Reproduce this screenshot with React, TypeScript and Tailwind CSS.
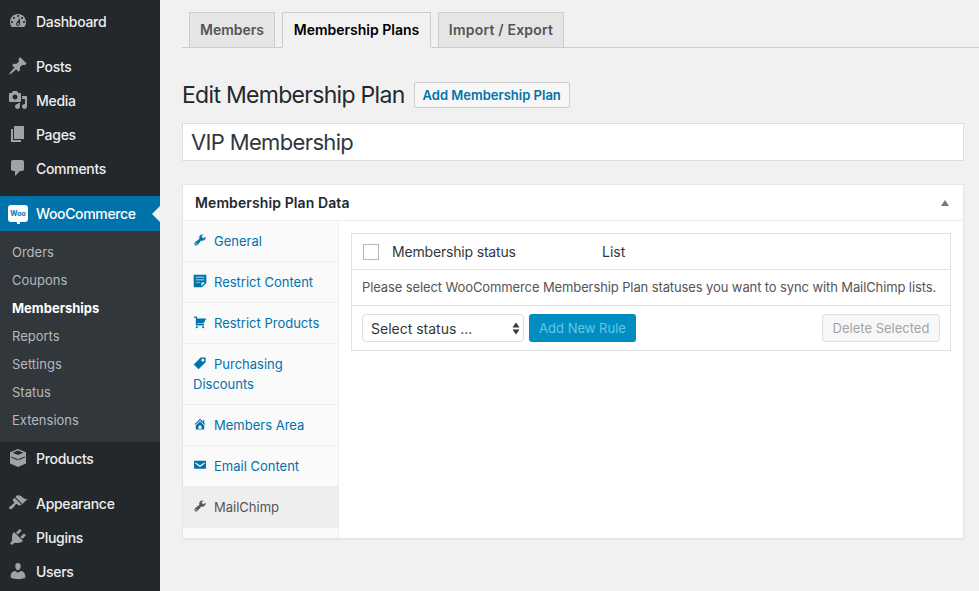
const icons = {
  dashboard: "M3.76 16h12.48c1.1-1.37 1.76-3.11 1.76-5 0-4.42-3.58-8-8-8s-8 3.58-8 8c0 1.89.66 3.63 1.76 5zM10 4c.55 0 1 .45 1 1s-.45 1-1 1-1-.45-1-1 .45-1 1-1zM6 6c.55 0 1 .45 1 1s-.45 1-1 1-1-.45-1-1 .45-1 1-1zm8 0c.55 0 1 .45 1 1s-.45 1-1 1-1-.45-1-1 .45-1 1-1zm-5.37 5.55L12 7v6c0 1.1-.9 2-2 2s-2-.9-2-2c0-.57.24-1.08.63-1.45zM4 10c.55 0 1 .45 1 1s-.45 1-1 1-1-.45-1-1 .45-1 1-1zm12 0c.55 0 1 .45 1 1s-.45 1-1 1-1-.45-1-1 .45-1 1-1zm-5 3c0-.55-.45-1-1-1s-1 .45-1 1 .45 1 1 1 1-.45 1-1z",
  post: "M10.44 3.02l1.82-1.82 6.36 6.35-1.83 1.82c-1.05-.68-2.48-.57-3.41.36l-.75.75c-.92.93-1.04 2.35-.35 3.41l-1.83 1.82-2.41-2.41-2.8 2.79c-.42.42-3.38 2.71-3.8 2.29s1.86-3.39 2.28-3.81l2.79-2.79L4.1 9.36l1.83-1.82c1.05.69 2.48.57 3.4-.36l.75-.75c.93-.92 1.05-2.35.36-3.41z",
  media: "M13 11V4c0-.55-.45-1-1-1h-1.67L9 1H5L3.67 3H2c-.55 0-1 .45-1 1v7c0 .55.45 1 1 1h10c.55 0 1-.45 1-1zM7 4.5c1.38 0 2.5 1.12 2.5 2.5S8.38 9.5 7 9.5 4.5 8.38 4.5 7 5.62 4.5 7 4.5zM14 6h5v10.5c0 1.38-1.12 2.5-2.5 2.5S14 17.88 14 16.5s1.12-2.5 2.5-2.5c.17 0 .34.02.5.05V9h-3V6zm-4 8.05V13h2v3.5c0 1.38-1.12 2.5-2.5 2.5S7 17.88 7 16.5 8.12 14 9.5 14c.17 0 .34.02.5.05z",
  page: "M6 15V2h10v13H6zm-1 1h8v2H3V5h2v11z",
  comments: "M5 2h9c1.1 0 2 .9 2 2v7c0 1.1-.9 2-2 2h-2l-5 5v-5H5c-1.1 0-2-.9-2-2V4c0-1.1.9-2 2-2z",
  products: "M10 1l8 3.2v11.3L10 19l-8-3.5V4.2L10 1zm0 1.6L4.6 4.7 10 6.9l5.4-2.2L10 2.6zM3 8.4l6.6 2.7v1.2L3 9.6V8.4zm14 0v1.2l-6.6 2.7v-1.2L17 8.4z",
  appearance: "M14.48 11.06L7.41 3.99l1.5-1.5c.5-.56 2.3-.47 3.51.32 1.21.8 1.43 1.28 2.91 2.1 1.18.64 2.45 1.26 4.45.85zm-.71.71L6.7 4.7 4.93 6.47c-.39.39-.39 1.02 0 1.41l1.06 1.06c.39.39.39 1.03 0 1.42-.6.6-1.43 1.11-2.21 1.69-.35.26-.7.53-1.01.84C1.43 13.23.4 14.84 1.4 15.84c.99 1 2.6-.03 3.93-1.37.31-.31.58-.66.84-1.01.58-.78 1.09-1.61 1.69-2.21.39-.39 1.02-.39 1.41 0l1.06 1.06c.39.39 1.02.39 1.41 0z",
  plugins: "M13.11 4.36L9.87 7.6 8 5.73l3.24-3.24c.35-.34 1.05-.2 1.56.32.52.51.66 1.21.31 1.55zm-8 1.77l.91-1.12 9.01 9.01-1.19.84c-.71.71-2.63 1.16-3.82 1.16H6.14L4.9 17.26c-.59.59-1.54.59-2.12 0-.59-.58-.59-1.53 0-2.12l1.24-1.24v-3.88c0-1.13.4-3.19 1.09-3.89zm7.26 3.97l3.24-3.24c.34-.35 1.04-.21 1.55.31.52.51.66 1.21.31 1.55l-3.24 3.25z",
  users: "M10 9.25c-2.27 0-2.73-3.44-2.73-3.44C7 4.02 7.82 2 9.97 2c2.16 0 2.98 2.02 2.71 3.81 0 0-.41 3.44-2.68 3.44zm0 2.57L12.72 10c2.39 0 4.52 2.33 4.52 4.53v2.49s-3.65 1.13-7.24 1.13c-3.65 0-7.24-1.13-7.24-1.13v-2.49c0-2.25 1.94-4.48 4.47-4.48z",
  tools: "M16.68 9.77c-1.34 1.34-3.3 1.67-4.95.99l-5.41 6.52c-.99.99-2.59.99-3.58 0s-.99-2.59 0-3.57l6.52-5.42c-.68-1.65-.35-3.61.99-4.95 1.28-1.28 3.12-1.62 4.72-1.06l-2.89 2.89 2.82 2.82 2.86-2.87c.53 1.58.18 3.39-1.08 4.65zM3.81 16.21c.4.39 1.04.39 1.43 0 .4-.4.4-1.04 0-1.43-.39-.4-1.03-.4-1.43 0-.39.39-.39 1.03 0 1.43z",
  aside: "M1 1h18v12l-6 6H1V1zm3 3v1h12V4H4zm0 4v1h12V8H4zm6 5v-1H4v1h6zm2 4l5-5h-5v5z",
  cart: "M6 13h9c.55 0 1 .45 1 1s-.45 1-1 1H5c-.55 0-1-.45-1-1V4H2c-.55 0-1-.45-1-1s.45-1 1-1h3c.55 0 1 .45 1 1v2h13l-4 7H6v1zm-.5 3c.83 0 1.5.67 1.5 1.5S6.33 19 5.5 19 4 18.33 4 17.5 4.67 16 5.5 16zm9 0c.83 0 1.5.67 1.5 1.5s-.67 1.5-1.5 1.5-1.5-.67-1.5-1.5.67-1.5 1.5-1.5z",
  tag: "M11 2h7v7L8 19l-7-7zm3 6c1.1 0 2-.9 2-2s-.9-2-2-2-2 .9-2 2 .9 2 2 2z",
  home: "M16 8.5l1.53 1.53-1.06 1.06L10 4.62l-6.47 6.47-1.06-1.06L10 2.5l4 4v-2h2v4zm-6-2.46l6 5.99V18H4v-5.97zM12 17v-5H8v5h4z",
  email: "M1.5 4h17v11.5h-17zM3.5 6l6.5 4.6L16.5 6v2.2L10 12.8 3.5 8.2z",
};

type IconName = keyof typeof icons;

function Icon({ name, className }: { name: IconName; className?: string }) {
  return (
    <svg viewBox="0 0 20 20" fill="currentColor" fillRule="evenodd" className={className}>
      <path d={icons[name]} />
    </svg>
  );
}

function MenuItem({ icon, label }: { icon: IconName; label: string }) {
  return (
    <div className="flex h-[34px] items-center pb-[2px] text-[14px] font-medium tracking-[-0.3px] text-[#eeeeee]">
      <Icon name={icon} className="ml-2 mr-2 h-5 w-5 text-[#9ea3a8]" />
      {label}
    </div>
  );
}

const submenu = ["Orders", "Coupons", "Memberships", "Reports", "Settings", "Status", "Extensions"];

function Sidebar() {
  return (
    <aside className="h-full w-[160px] shrink-0 overflow-hidden bg-[#23282d] pt-[5px]">
      <MenuItem icon="dashboard" label="Dashboard" />
      <div className="mt-[11px]">
        <MenuItem icon="post" label="Posts" />
        <MenuItem icon="media" label="Media" />
        <MenuItem icon="page" label="Pages" />
        <MenuItem icon="comments" label="Comments" />
      </div>

      {/* WooCommerce */}
      <div className="relative mt-[10px] flex h-[35px] items-center bg-[#0073aa] text-[14px] font-medium tracking-[-0.35px] text-white">
        <div className="relative ml-2 mr-2 flex h-[17px] w-5 items-center justify-center rounded-[3px] bg-white text-[7px] font-bold leading-none tracking-normal text-[#0073aa]">
          Woo
          <span className="absolute -bottom-[2px] left-[9px] h-[3px] w-[3px] bg-white" />
        </div>
        WooCommerce
        <span className="absolute right-0 top-[10px] h-0 w-0 border-y-[8px] border-r-[8px] border-y-transparent border-r-[#f1f1f1]" />
      </div>
      <div className="bg-[#32373c] pb-[7px] pt-2">
        {submenu.map((s) => (
          <div
            key={s}
            className={
              s === "Memberships"
                ? "flex h-7 items-center pl-3 text-[13px] font-bold text-white"
                : "flex h-7 items-center pl-3 text-[13px] text-[#b4b9be]"
            }
          >
            {s}
          </div>
        ))}
      </div>

      <MenuItem icon="products" label="Products" />
      <div className="mt-[11px]">
        <MenuItem icon="appearance" label="Appearance" />
        <MenuItem icon="plugins" label="Plugins" />
        <MenuItem icon="users" label="Users" />
      </div>
    </aside>
  );
}

const dataTabs: { icon: IconName; label: string; wrap?: string }[] = [
  { icon: "tools", label: "General" },
  { icon: "aside", label: "Restrict Content" },
  { icon: "cart", label: "Restrict Products" },
  { icon: "tag", label: "Purchasing", wrap: "Discounts" },
  { icon: "home", label: "Members Area" },
  { icon: "email", label: "Email Content" },
];

function DataTabs() {
  return (
    <div className="w-[156px] shrink-0 border-r border-[#eeeeee] bg-[#fafafa]">
      {dataTabs.map((t) => (
        <div key={t.label} className="border-b border-[#eeeeee] px-[10px] py-[10px] text-[13px] leading-5 text-[#0073aa]">
          <div className="flex items-center">
            <Icon name={t.icon} className="-mt-[3px] mr-[7px] h-[14px] w-[14px]" />
            {t.label}
          </div>
          {t.wrap && <div>{t.wrap}</div>}
        </div>
      ))}
      <div className="-mt-px flex h-[42px] items-center bg-[#eeeeee] px-[10px] pt-px text-[13px] text-[#555555]">
        <Icon name="tools" className="-mt-[3px] mr-[7px] h-[14px] w-[14px]" />
        MailChimp
      </div>
    </div>
  );
}

function RulesTable() {
  return (
    <div className="m-3 flex-1 self-start border border-[#e1e1e1] text-[13px] text-[#32373c]">
      <div className="flex h-9 items-center border-b border-[#e1e1e1] pl-[11px] text-[14px]">
        <input type="checkbox" readOnly className="h-4 w-4 appearance-none border border-[#b4b9be] bg-white" />
        <span className="ml-[13px] w-[210px] tracking-[-0.18px]">Membership status</span>
        <span>List</span>
      </div>
      <div className="flex h-9 items-center border-b border-[#e1e1e1] pl-[10px] tracking-[-0.11px] text-[#555555]">
        Please select WooCommerce Membership Plan statuses you want to sync with MailChimp lists.
      </div>
      <div className="flex h-11 items-center justify-between pl-[10px] pr-[10px]">
        <div className="flex items-center gap-[5px]">
          <div className="relative">
            <select className="h-7 w-[162px] appearance-none rounded-[4px] border border-[#dddddd] bg-white pl-2 text-[14px] text-[#32373c]">
              <option>Select status ...</option>
            </select>
            <svg viewBox="0 0 8 12" fill="#32373c" className="absolute right-[4px] top-[8px] h-[13px] w-[8px]">
              <path d="M4 0l3.5 5H.5zM4 12L.5 7h7z" />
            </svg>
          </div>
          <button className="h-7 w-[107px] rounded-[3px] bg-[#008ec2] pt-px text-[13px] text-[#66c6e4]">Add New Rule</button>
        </div>
        <button className="h-7 w-[118px] rounded-[3px] border border-[#dddddd] bg-[#f7f7f7] pt-px text-[13px] text-[#a0a5aa]">
          Delete Selected
        </button>
      </div>
    </div>
  );
}

export default function App() {
  return (
    <div className="flex h-screen overflow-hidden bg-[#f1f1f1] [font-family:Inter,'Noto_Sans',sans-serif]">
      <Sidebar />
      <main className="flex-1 pl-[22px]">
        {/* Tabs */}
        <div className="mt-3 flex h-9 items-end gap-[7px] border-b border-[#cccccc] pl-[7px]">
          <div className="-mb-px flex h-9 w-[86px] items-center justify-center border border-[#cccccc] bg-[#e5e5e5] pb-[2px] text-[14px] font-semibold text-[#555555]">
            Members
          </div>
          <div className="-mb-px flex h-9 w-[149px] items-center justify-center border border-[#cccccc] border-b-[#f1f1f1] bg-[#f1f1f1] pb-[2px] text-[14px] font-semibold text-black">
            Membership Plans
          </div>
          <div className="-mb-px flex h-9 w-[126px] items-center justify-center border border-[#cccccc] bg-[#e5e5e5] pb-[2px] text-[14px] font-semibold tracking-[0.2px] text-[#555555]">
            Import / Export
          </div>
        </div>

        <div className="mr-[15px]">
          <div className="mt-[34px] flex items-center">
            <h1 className="text-[23px] leading-[26px] tracking-[-0.7px] text-[#23282d]">Edit Membership Plan</h1>
            <button className="ml-[9px] h-[26px] rounded-[2px] border border-[#cccccc] bg-[#f7f7f7] px-2 pt-px text-[13px] font-semibold text-[#0073aa]">
              Add Membership Plan
            </button>
          </div>

          <input
            readOnly
            value="VIP Membership"
            className="mt-[15px] block h-[38px] w-full border border-[#dddddd] bg-white px-2 text-[22px] tracking-[-0.65px] text-[#32373c]"
          />

          <section className="mt-[23px] flex h-[355px] flex-col border border-[#e5e5e5] bg-white shadow-[0_1px_1px_rgba(0,0,0,0.04)]">
            <div className="flex h-9 shrink-0 items-center justify-between border-b border-[#eeeeee] pl-3 pr-[14px] text-[14px] font-semibold tracking-[0.1px] text-[#23282d]">
              Membership Plan Data
              <span className="h-0 w-0 border-x-[4px] border-b-[6px] border-x-transparent border-b-[#72777c]" />
            </div>
            <div className="flex flex-1">
              <DataTabs />
              <RulesTable />
            </div>
          </section>
        </div>
      </main>
    </div>
  );
}
